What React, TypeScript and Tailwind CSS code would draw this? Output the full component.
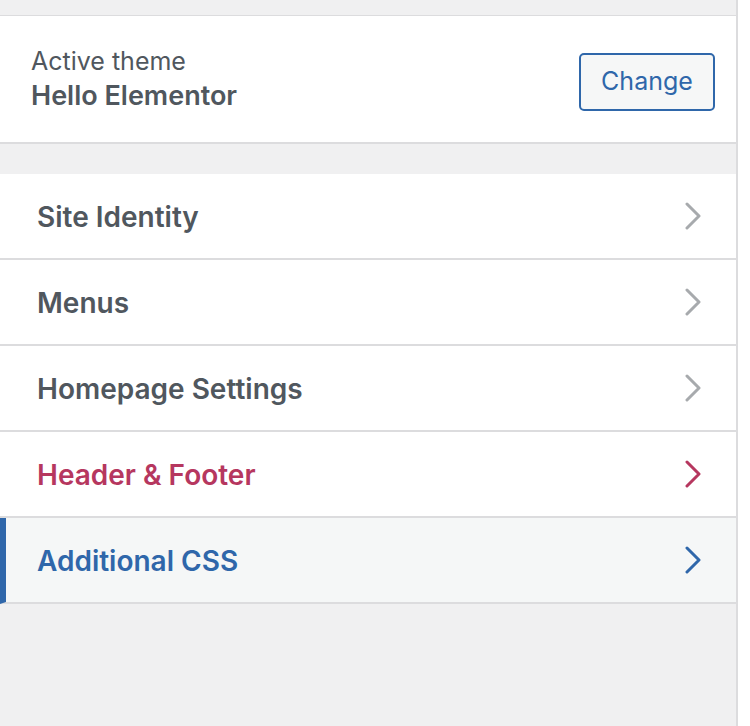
type Item = { label: string; tone?: "accent" | "active" };

const items: Item[] = [
  { label: "Site Identity" },
  { label: "Menus" },
  { label: "Homepage Settings" },
  { label: "Header & Footer", tone: "accent" },
  { label: "Additional CSS", tone: "active" },
];

function Chevron({ className }: { className: string }) {
  return (
    <svg width="20" height="28" viewBox="0 0 20 28" fill="none" className={className}>
      <polyline
        points="4,2 16,14 4,26"
        stroke="currentColor"
        strokeWidth="3"
        strokeLinecap="round"
        strokeLinejoin="round"
      />
    </svg>
  );
}

function Row({ label, tone }: Item) {
  const color =
    tone === "accent"
      ? "text-[#b6375f]"
      : tone === "active"
        ? "text-[#2f67aa]"
        : "text-[#50575e]";

  return (
    <div
      className={`flex h-[86px] items-center justify-between border-b-2 border-[#dcdcde] pr-[33px] ${
        tone === "active"
          ? "border-l-[6px] border-l-[#2f67aa] bg-[#f5f7f7] pl-[31px]"
          : "bg-white pl-[37px]"
      }`}
    >
      <span className={`pt-[2px] text-[28px] font-semibold ${color}`}>{label}</span>
      <Chevron className={tone ? color : "text-[#a7aaad]"} />
    </div>
  );
}

export default function App() {
  return (
    <div className="flex h-[726px] w-[750px] bg-white font-['Inter',sans-serif]">
      <div className="flex w-[738px] flex-col border-r-2 border-[#dcdcde] bg-[#f0f0f1]">
        <div className="h-[16px] border-b border-[#dcdcde]" />

        <div className="flex h-[128px] items-center justify-between border-b-2 border-[#dcdcde] bg-white pl-[31px] pr-[21px]">
          <div className="flex flex-col">
            <span className="text-[25px] leading-[34px] text-[#50575e]">Active theme</span>
            <span className="text-[27px] font-semibold leading-[36px] text-[#50575e]">
              Hello Elementor
            </span>
          </div>
          <button className="mt-[6px] h-[58px] w-[136px] rounded-[5px] border-2 border-[#2f67aa] bg-[#f6f7f7] text-[25px] text-[#2f67aa]">
            Change
          </button>
        </div>

        <div className="h-[30px]" />

        <div className="flex flex-col">
          {items.map((item) => (
            <Row key={item.label} {...item} />
          ))}
        </div>
      </div>
    </div>
  );
}
